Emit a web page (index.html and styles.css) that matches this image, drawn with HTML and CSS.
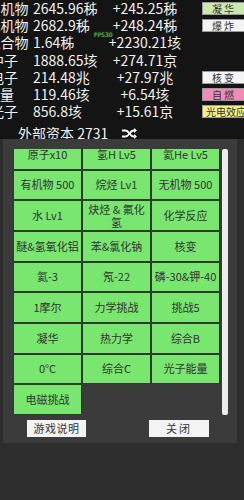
FILE: index.html
```html
<!DOCTYPE html>
<html>
<head>
<meta charset="utf-8">
<link rel="stylesheet" href="styles.css">
</head>
<body>
<div class="top">
  <div class="stats">
    <div class="row"><span class="lbl">有机物</span><span class="val">2645.96秭</span><span class="dlt">+245.25秭</span><span class="btn b-green">凝华</span></div>
    <div class="row"><span class="lbl">无机物</span><span class="val">2682.9秭</span><span class="dlt">+248.24秭</span><span class="btn b-white">爆炸</span></div>
    <div class="row"><span class="lbl">混合物</span><span class="val">1.64秭</span><span class="dlt">+2230.21垓</span><span></span></div>
    <div class="row"><span class="lbl short">中子</span><span class="val">1888.65垓</span><span class="dlt">+274.71京</span><span></span></div>
    <div class="row"><span class="lbl short">电子</span><span class="val">214.48兆</span><span class="dlt">+27.97兆</span><span class="btn b-white">核变</span></div>
    <div class="row"><span class="lbl shorter">能量</span><span class="val">119.46垓</span><span class="dlt">+6.54垓</span><span class="btn b-pink">自燃</span></div>
    <div class="row"><span class="lbl short">光子</span><span class="val">856.8垓</span><span class="dlt">+15.61京</span><span class="btn b-yellow">光电效应</span></div>
  </div>
  <div class="capital">
    <span class="cap-text">外部资本 2731</span>
    <svg class="shuffle" width="15" height="11" viewBox="0 0 15 11">
      <path d="M0 2.5h3.5c2 0 3 1.5 4 3s2 3 4 3h2" fill="none" stroke="#fff" stroke-width="1.8"/>
      <path d="M0 8.5h3.5c2 0 3-1.5 4-3s2-3 4-3h2" fill="none" stroke="#fff" stroke-width="1.8"/>
      <path d="M12 0l3 2.5-3 2.5z M12 6l3 2.5-3 2.5z" fill="#fff"/>
    </svg>
  </div>
  <div class="fps">FPS30</div>
</div>
<div class="lower">
  <div class="panel">
    <div class="body">
      <div class="viewport">
        <div class="grid">
          <div class="cell">原子x10</div>
          <div class="cell">氢H Lv5</div>
          <div class="cell">氦He Lv5</div>
          <div class="cell">有机物 500</div>
          <div class="cell">烷烃 Lv1</div>
          <div class="cell">无机物 500</div>
          <div class="cell">水 Lv1</div>
          <div class="cell">炔烃 &amp; 氟化氢</div>
          <div class="cell">化学反应</div>
          <div class="cell">醚&amp;氢氧化铝</div>
          <div class="cell">苯&amp;氯化钠</div>
          <div class="cell">核变</div>
          <div class="cell">氦-3</div>
          <div class="cell">氖-22</div>
          <div class="cell">磷-30&amp;钾-40</div>
          <div class="cell">1摩尔</div>
          <div class="cell">力学挑战</div>
          <div class="cell">挑战5</div>
          <div class="cell">凝华</div>
          <div class="cell">热力学</div>
          <div class="cell">综合B</div>
          <div class="cell">0°C</div>
          <div class="cell">综合C</div>
          <div class="cell">光子能量</div>
          <div class="cell">电磁挑战</div>
        </div>
      </div>
      <div class="scrollbar"></div>
    </div>
    <div class="actions">
      <div class="action a-help">游戏说明</div>
      <div class="action a-close">关闭</div>
    </div>
  </div>
</div>
</body>
</html>
```

FILE: styles.css
```css
html, body {
  margin: 0;
  padding: 0;
}
body {
  width: 244px;
  height: 500px;
  overflow: hidden;
  background: #2d2d2d;
  font-family: "Noto Sans CJK SC", "Noto Sans", sans-serif;
}
.top {
  position: relative;
  height: 139px;
  background: #141414;
  color: #f0f0f0;
  overflow: hidden;
}
.stats {
  margin-top: -0.5px;
  margin-left: -14px;
}
.row {
  display: grid;
  grid-template-columns: 46px 71px 84px 46px;
  height: 17.3px;
  align-items: center;
  font-size: 14px;
  line-height: 17px;
  white-space: nowrap;
}
.lbl {
  text-align: center;
  padding-right: 3px;
}
.lbl.short {
  padding-right: 10px;
}
.lbl.shorter {
  padding-right: 20px;
}
.val {
  padding-left: 1px;
}
.dlt {
  text-align: center;
}
.btn {
  margin-left: 15px;
  width: 44px;
  height: 13px;
  box-sizing: border-box;
  border: 1px solid #9a9a9a;
  font-size: 10px;
  line-height: 11px;
  color: #333;
  text-align: left;
}
.b-green { background: #cbe8ad; padding-left: 9px; letter-spacing: 2px; }
.b-white { background: #f4f4f4; padding-left: 9px; letter-spacing: 2px; }
.b-pink { background: #f08cb6; padding-left: 9px; letter-spacing: 2px; }
.b-yellow { background: #f2f07e; padding-left: 3px; }
.capital {
  display: flex;
  align-items: center;
  height: 20px;
  margin-top: 3px;
  padding-left: 18px;
  font-size: 14px;
  line-height: 17px;
}
.cap-text {
  width: 104px;
}
.shuffle {
  display: block;
}
.fps {
  position: absolute;
  left: 94px;
  top: 31px;
  font-family: "DejaVu Sans", sans-serif;
  font-size: 6px;
  line-height: 7px;
  color: #3a9a3a;
  text-shadow: 0 0 1px #7f7;
}
.lower {
  height: 361px;
  background: #2d2d2d;
}
.panel {
  margin-left: 3px;
  width: 234px;
  height: 304px;
  box-sizing: border-box;
  background: #3b3b3b;
  padding: 10px 0 0 10px;
}
.body {
  display: flex;
  gap: 2px;
}
.viewport {
  width: 207px;
  height: 266px;
  overflow: hidden;
}
.grid {
  margin-top: -10px;
  display: grid;
  grid-template-columns: 69px 69px 69px;
  grid-auto-rows: 30.67px;
}
.cell {
  box-sizing: border-box;
  border: 1px solid #2f3a2f;
  background: #78e66f;
  color: #333;
  font-size: 11px;
  line-height: 13px;
  display: flex;
  align-items: center;
  justify-content: center;
  text-align: center;
  padding: 0 1px;
}
.scrollbar {
  width: 6px;
  height: 266px;
  border-radius: 2px;
  background: #ececec;
}
.actions {
  display: flex;
  margin-top: 5px;
}
.action {
  height: 17px;
  background: #f3f3f3;
  color: #333;
  font-size: 11px;
  line-height: 17px;
  text-align: center;
  letter-spacing: 0.5px;
}
.a-help {
  margin-left: 14px;
  width: 59px;
}
.a-close {
  margin-left: 63px;
  width: 60px;
  letter-spacing: 2px;
}
```
